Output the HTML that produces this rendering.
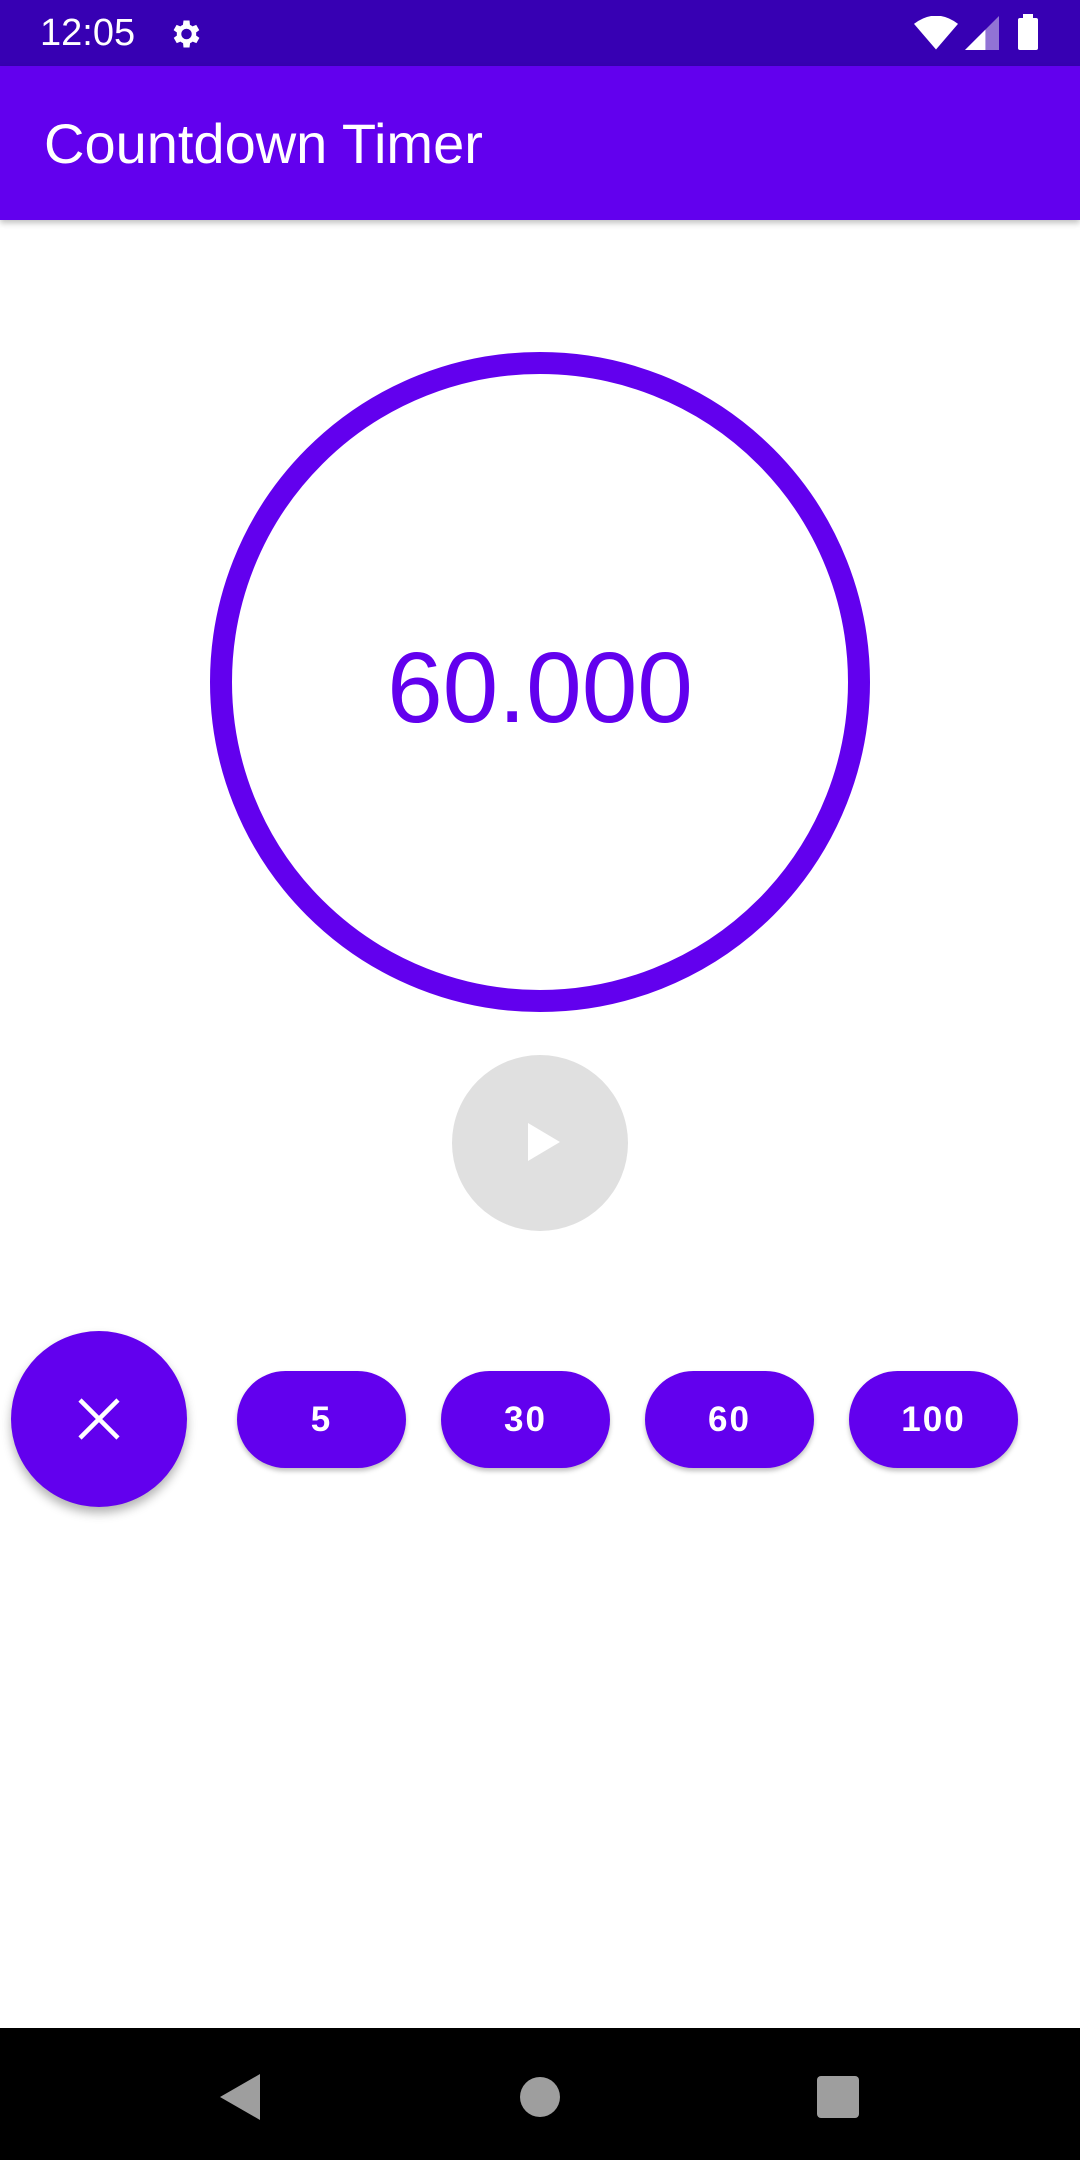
<!DOCTYPE html>
<html><head><meta charset="utf-8"><style>
*{margin:0;padding:0;box-sizing:border-box}
body{width:1080px;height:2160px;background:#fff;position:relative;overflow:hidden;font-family:"Liberation Sans",sans-serif}
.sb{position:absolute;top:0;left:0;width:1080px;height:66px;background:#3700b3;color:#fff}
.ab{position:absolute;top:66px;left:0;width:1080px;height:154px;background:#6200ee;box-shadow:0 3px 6px rgba(0,0,0,.25)}
.ab span{position:absolute;left:44px;top:45px;font-size:56px;color:#fff}
.ring{position:absolute;left:210px;top:352px;width:660px;height:660px;border-radius:50%;border:22px solid #6200ee}
.num{position:absolute;left:0;width:1080px;top:628px;text-align:center;font-size:100px;color:#6200ee;line-height:120px}
.play{position:absolute;left:452px;top:1055px;width:176px;height:176px;border-radius:50%;background:#e0e0e0}
.fab{position:absolute;left:11px;top:1331px;width:176px;height:176px;border-radius:50%;background:#6200ee;box-shadow:0 6px 10px rgba(0,0,0,.3)}
.chip{position:absolute;top:1371px;width:169px;height:97px;border-radius:49px;background:#6200ee;color:#fff;font-size:35px;font-weight:bold;letter-spacing:2px;text-align:center;line-height:97px;box-shadow:0 3px 5px rgba(0,0,0,.25)}
.nb{position:absolute;top:2028px;left:0;width:1080px;height:132px;background:#000}
</style></head><body>
<div class="sb">
<span style="position:absolute;left:40px;top:12px;font-size:38px">12:05</span>
<svg style="position:absolute;left:167px;top:16px" width="36" height="36" viewBox="0 0 24 24"><path fill="#fff" d="M19.4 13a7.5 7.5 0 0 0 0-2l2.1-1.6-2-3.5-2.5 1a7 7 0 0 0-1.7-1L15 3h-4l-.4 2.9a7 7 0 0 0-1.7 1l-2.5-1-2 3.5L6.6 11a7.5 7.5 0 0 0 0 2l-2.1 1.6 2 3.5 2.5-1a7 7 0 0 0 1.7 1L11 21h4l.4-2.9a7 7 0 0 0 1.7-1l2.5 1 2-3.5zM13 15.5a3.5 3.5 0 1 1 0-7 3.5 3.5 0 0 1 0 7z"/></svg>
<svg style="position:absolute;left:914px;top:16px" width="44" height="34" viewBox="0 0 24 18"><path fill="#fff" d="M12 18 0 4Q12-5 24 4z"/></svg>
<svg style="position:absolute;left:964px;top:16px" width="36" height="34" viewBox="0 0 20 20"><path fill="#fff" d="M20 0v20H0z" opacity=".45"/><path fill="#fff" d="M12 8v12H0z"/></svg>
<div style="position:absolute;left:1018px;top:18px;width:20px;height:32px;background:#fff;border-radius:2px"></div>
<div style="position:absolute;left:1023px;top:14px;width:10px;height:5px;background:#fff"></div>
</div>
<div class="ab"><span>Countdown Timer</span></div>
<div class="ring"></div>
<div class="num">60.000</div>
<div class="play"><svg style="position:absolute;left:76px;top:68px" width="32" height="38" viewBox="0 0 32 38"><path fill="#fff" d="M0 0 32 19 0 38z"/></svg></div>
<div class="fab"><svg style="position:absolute;left:66px;top:66px" width="44" height="44" viewBox="0 0 44 44"><path stroke="#fff" stroke-width="4.5" d="M3 3 41 41M41 3 3 41"/></svg></div>
<div class="chip" style="left:237px">5</div>
<div class="chip" style="left:441px">30</div>
<div class="chip" style="left:645px">60</div>
<div class="chip" style="left:849px">100</div>
<div class="nb">
<svg style="position:absolute;left:218px;top:46px" width="42" height="46" viewBox="0 0 42 46"><path fill="#9e9e9e" d="M42 0V46L2 23z"/></svg>
<div style="position:absolute;left:520px;top:49px;width:40px;height:40px;border-radius:50%;background:#9e9e9e"></div>
<div style="position:absolute;left:817px;top:48px;width:42px;height:42px;border-radius:4px;background:#9e9e9e"></div>
</div>
</body></html>
